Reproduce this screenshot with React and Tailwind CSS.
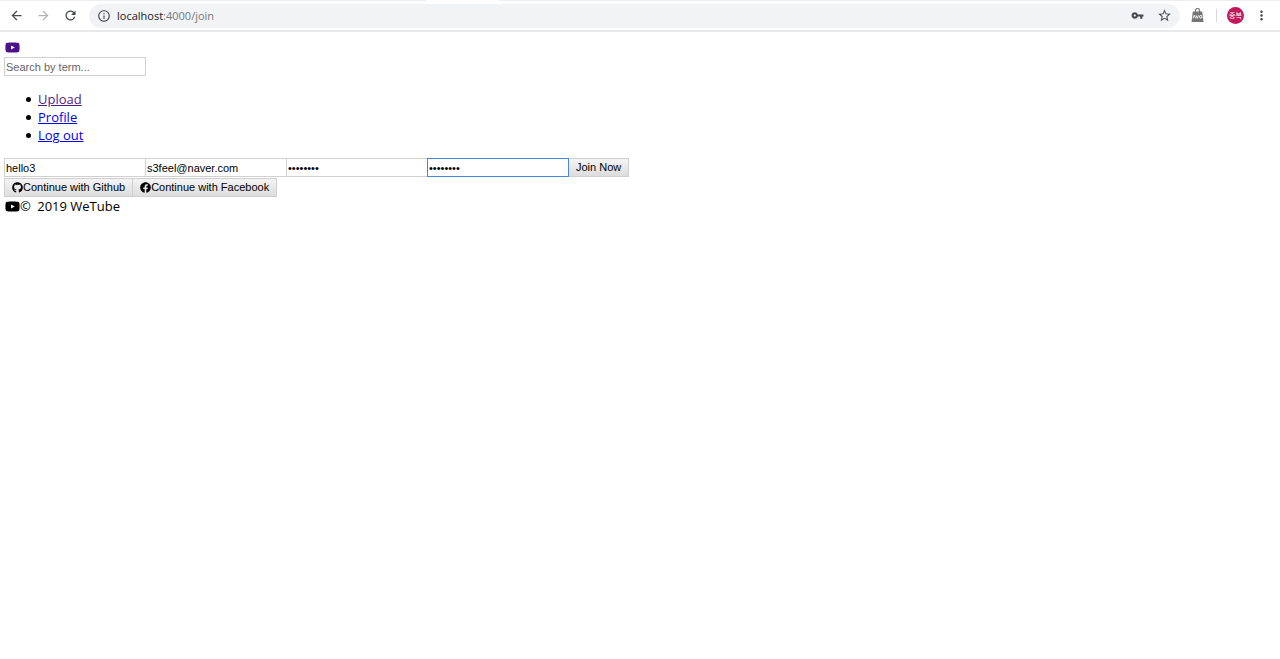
import React, { useState } from "react";
import {
    MdArrowBack,
    MdArrowForward,
    MdRefresh,
    MdInfoOutline,
    MdVpnKey,
    MdStarBorder,
    MdMoreVert,
} from "react-icons/md";
import { FaYoutube, FaGithub, FaFacebook } from "react-icons/fa";

const inputClass =
    "block h-[19px] w-[142px] border border-[#d0d0d0] bg-white px-px font-['Liberation_Sans',sans-serif] text-[11px] text-black outline-none placeholder:text-[#666666]";

const buttonClass =
    "flex h-[19px] items-center border border-[#cfcfcf] bg-linear-to-b from-[#f4f4f4] to-[#dddddd] px-[7px] font-['Liberation_Sans',sans-serif] text-[11px] text-black";

const listItemClass =
    "flex items-center gap-[7px] before:size-[5px] before:rounded-full before:bg-black";

const BagIcon = () => (
    <svg width="13" height="15" viewBox="0 0 13 15">
        <path d="M4.5 4V2.5a2 2 0 0 1 4 0V4" fill="none" stroke="#757575" strokeWidth="1.2" />
        <path d="M1.8 3.5h9.4L12.5 14H.5z" fill="#757575" />
        <path
            d="M2 10.3l1.3-3 1.3 3M5 7.3l1.3 3 1.3-3M10.9 7.8q-2.3-1.1-2.5.9t2.5 1.2V8.9h-1"
            fill="none"
            stroke="#fff"
            strokeWidth="0.9"
        />
    </svg>
);

const Toolbar = () => (
    <div className="border-b-2 border-[#e8e9eb] bg-white">
        <div className="flex h-px">
            <div className="w-1/3 bg-[#eceef0]" />
            <div className="w-[72px]" />
            <div className="grow bg-[#eceef0]" />
        </div>
        <div className="flex h-[29px] items-center">
            <button aria-label="Back" className="ml-[9px] text-[#46494d]">
                <MdArrowBack size={15} />
            </button>
            <button aria-label="Forward" className="ml-3 text-[#b0b2b5]">
                <MdArrowForward size={15} />
            </button>
            <button aria-label="Reload" className="ml-3 text-[#46494d]">
                <MdRefresh size={15} />
            </button>
            <div className="ml-[11px] flex h-6 grow items-center rounded-full bg-[#f1f3f4] px-2 text-[#46494d]">
                <MdInfoOutline size={14} />
                <div className="ml-[6px] grow font-['Open_Sans',sans-serif] text-[11px] leading-4 text-[#202124]">
                    localhost<span className="text-[#74787c]">:4000/join</span>
                </div>
                <button aria-label="Saved passwords">
                    <MdVpnKey size={13} />
                </button>
                <button aria-label="Bookmark this page" className="ml-[13px]">
                    <MdStarBorder size={15} />
                </button>
            </div>
            <button aria-label="AVG" className="ml-[11px]">
                <BagIcon />
            </button>
            <div className="ml-3 h-[13px] w-px bg-[#d5d7da]" />
            <button
                aria-label="Account"
                className="ml-[10px] flex size-[17px] items-center justify-center rounded-full bg-[#c2185b] font-['Noto_Sans_CJK_KR',sans-serif] text-[7px] leading-none text-white"
            >
                종복
            </button>
            <button aria-label="Menu" className="mr-[11px] ml-[10px] text-[#46494d]">
                <MdMoreVert size={15} />
            </button>
        </div>
    </div>
);

const Header = () => (
    <header>
        <a href="#home" aria-label="Home" className="ml-px flex h-[19px] w-4 items-center text-[#4b1188]">
            <FaYoutube size={15} />
        </a>
        <input
            type="text"
            aria-label="Search by term"
            placeholder="Search by term..."
            className={inputClass}
        />
        <ul className="my-[14px] pl-[22px] leading-[18px]">
            <li className={listItemClass}>
                <a href="#upload" className="text-[#551a8b] underline">Upload</a>
            </li>
            <li className={listItemClass}>
                <a href="#profile" className="text-[#0000ee] underline">Profile</a>
            </li>
            <li className={listItemClass}>
                <a href="#logout" className="text-[#0000ee] underline">Log out</a>
            </li>
        </ul>
    </header>
);

const JoinForm = () => {
    const [name, setName] = useState("hello3");
    const [email, setEmail] = useState("s3feel@naver.com");
    const [password, setPassword] = useState("password");
    const [password2, setPassword2] = useState("password");

    return (
        <form className="flex -space-x-px" onSubmit={(e) => e.preventDefault()}>
            <input
                type="text"
                aria-label="Full name"
                value={name}
                onChange={(e) => setName(e.target.value)}
                className={inputClass}
            />
            <input
                type="email"
                aria-label="Email"
                value={email}
                onChange={(e) => setEmail(e.target.value)}
                className={inputClass}
            />
            <input
                type="password"
                aria-label="Password"
                value={password}
                onChange={(e) => setPassword(e.target.value)}
                className={inputClass}
            />
            <input
                type="password"
                aria-label="Verify password"
                value={password2}
                onChange={(e) => setPassword2(e.target.value)}
                className={`${inputClass} z-10 border-[#4a86d8]!`}
            />
            <button type="submit" className={buttonClass}>Join Now</button>
        </form>
    );
};

const App = () => {
    return (
        <div className="bg-white font-['Open_Sans',sans-serif] text-[13px] text-black">
            <Toolbar />
            <div className="px-1 pt-[6px]">
                <Header />
                <main>
                    <JoinForm />
                    <div className="mt-px flex -space-x-px">
                        <button className={buttonClass}>
                            <FaGithub size={11} />
                            Continue with Github
                        </button>
                        <button className={buttonClass}>
                            <FaFacebook size={11} />
                            Continue with Facebook
                        </button>
                    </div>
                </main>
                <footer className="ml-px flex items-center leading-[18px]">
                    <FaYoutube size={15} />
                    <p>
                        <span className="mr-[3px]">©</span> 2019 WeTube
                    </p>
                </footer>
            </div>
        </div>
    );
};

export default App;
